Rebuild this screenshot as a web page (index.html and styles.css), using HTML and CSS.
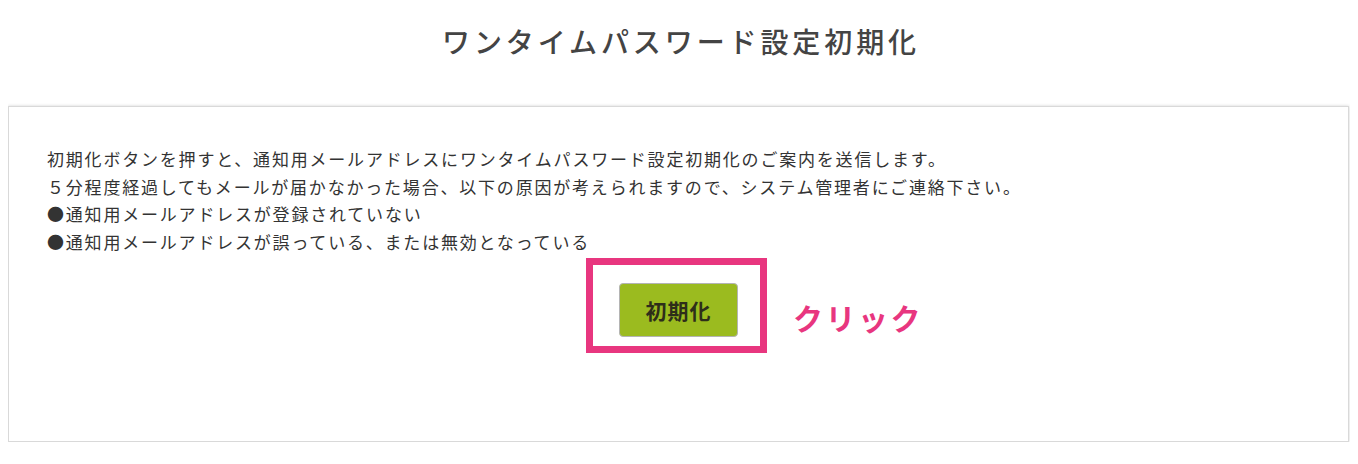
FILE: index.html
```html
<!DOCTYPE html>
<html lang="ja">
<head>
    <meta charset="UTF-8">
    <meta name="viewport" content="width=device-width, initial-scale=1.0">
    <title>ワンタイムパスワード設定初期化</title>
    <link rel="stylesheet" href="styles.css">
</head>
<body>
    <h1 class="page-title">ワンタイムパスワード設定初期化</h1>
    <section class="panel">
        <div class="notice">
            <p>初期化ボタンを押すと、通知用メールアドレスにワンタイムパスワード設定初期化のご案内を送信します。</p>
            <p>５分程度経過してもメールが届かなかった場合、以下の原因が考えられますので、システム管理者にご連絡下さい。</p>
            <p>●通知用メールアドレスが登録されていない</p>
            <p>●通知用メールアドレスが誤っている、または無効となっている</p>
        </div>
        <div class="actions">
            <div class="highlight">
                <button class="btn-reset" type="button">初期化</button>
                <span class="click-label">クリック</span>
            </div>
        </div>
    </section>
</body>
</html>
```

FILE: styles.css
```css
* {
    box-sizing: border-box;
}

body {
    margin: 8px;
    background: #fff;
    font-family: "Noto Sans CJK JP", "Noto Sans", sans-serif;
    color: #333;
}

.page-title {
    margin: 12px 0 44px;
    padding-left: 4px;
    font-size: 28px;
    line-height: 42px;
    font-weight: 500;
    letter-spacing: 3.9px;
    text-align: center;
    color: #444;
}

.panel {
    height: 336px;
    margin-right: 1px;
    padding: 38px 38px 0;
    border: 1px solid #d9d9d9;
    box-shadow: 0 0 3px rgba(0, 0, 0, 0.18);
}

.notice p {
    margin: 0;
    font-size: 17px;
    line-height: 27.7px;
    letter-spacing: 1.8px;
    color: #333;
}

.actions {
    display: flex;
    justify-content: center;
    margin-top: 2px;
    padding-right: 4px;
}

.highlight {
    position: relative;
    padding: 18px 22px 9px 26px;
    border: 7px solid #e8367f;
}

.btn-reset {
    display: block;
    width: 119px;
    height: 54px;
    padding: 0;
    border: 1px solid #b4b4b4;
    border-radius: 4px;
    background: #9bbb1f;
    font-family: inherit;
    font-size: 21px;
    font-weight: 700;
    color: #2e2e1a;
    letter-spacing: 1px;
    cursor: pointer;
}

.click-label {
    position: absolute;
    left: calc(100% + 33px);
    top: calc(50% + 12px);
    transform: translateY(-50%);
    white-space: nowrap;
    font-size: 30px;
    font-weight: 700;
    letter-spacing: 2.5px;
    color: #e8367f;
}
```
